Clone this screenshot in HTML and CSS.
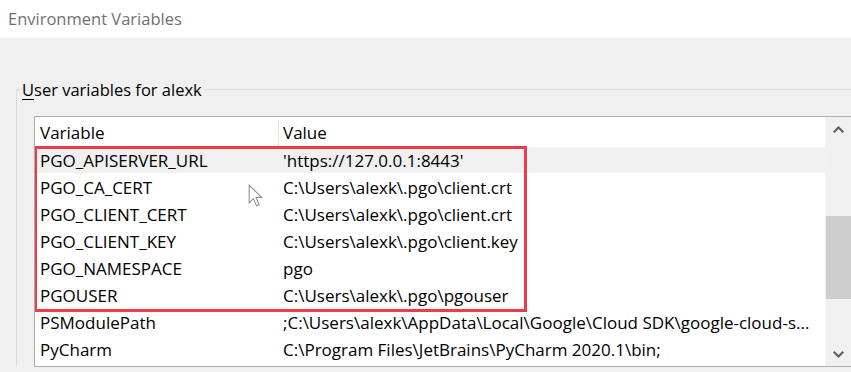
FILE: index.html
```html
<!DOCTYPE html>
<html>
<head>
<meta charset="utf-8">
<link rel="stylesheet" href="styles.css">
</head>
<body>
<div class="titlebar">Environment Variables</div>
<div class="content">
  <fieldset class="group">
    <legend class="group-label"><span class="ul">U</span>ser variables for alexk</legend>
    <div class="listbox">
      <div class="table">
        <div class="row header"><div class="c1 hdr">Variable</div><div class="c2">Value</div></div>
        <div class="row sel"><div class="c1">PGO_APISERVER_URL</div><div class="c2">'https://127.0.0.1:8443'</div></div>
        <div class="row"><div class="c1">PGO_CA_CERT</div><div class="c2">C:\Users\alexk\.pgo\client.crt</div></div>
        <div class="row"><div class="c1">PGO_CLIENT_CERT</div><div class="c2">C:\Users\alexk\.pgo\client.crt</div></div>
        <div class="row"><div class="c1">PGO_CLIENT_KEY</div><div class="c2">C:\Users\alexk\.pgo\client.key</div></div>
        <div class="row"><div class="c1">PGO_NAMESPACE</div><div class="c2">pgo</div></div>
        <div class="row"><div class="c1">PGOUSER</div><div class="c2">C:\Users\alexk\.pgo\pgouser</div></div>
        <div class="row"><div class="c1">PSModulePath</div><div class="c2">;C:\Users\alexk\AppData\Local\Google\Cloud SDK\google-cloud-s...</div></div>
        <div class="row"><div class="c1">PyCharm</div><div class="c2">C:\Program Files\JetBrains\PyCharm 2020.1\bin;</div></div>
      </div>
      <div class="scrollbar">
        <div class="sb-btn">
          <svg width="11" height="7" viewBox="0 0 11 7"><path d="M0 5.5 L5.5 0 L11 5.5 L9.5 7 L5.5 3 L1.5 7 Z" fill="#606060"/></svg>
        </div>
        <div class="sb-space1"></div>
        <div class="sb-thumb"></div>
        <div class="sb-space2"></div>
        <div class="sb-btn">
          <svg width="11" height="7" viewBox="0 0 11 7"><path d="M0 1.5 L5.5 7 L11 1.5 L9.5 0 L5.5 4 L1.5 0 Z" fill="#606060"/></svg>
        </div>
      </div>
      <div class="highlight"></div>
      <svg class="cursor" width="17" height="25" viewBox="0 0 16 24"><path d="M1 1 L1 18 L5 14 L8 21 L10.5 20 L7.5 13 L13 13 Z" fill="#ffffff" stroke="#8a8a8a" stroke-width="1" stroke-linejoin="miter"/></svg>
    </div>
  </fieldset>
</div>
</body>
</html>
```
FILE: styles.css
```css
html, body {
  margin: 0;
  padding: 0;
}
body {
  width: 851px;
  height: 372px;
  overflow: hidden;
  background: #f0f0f0;
  font-family: "Open Sans", "Noto Sans", sans-serif;
  color: #000;
}
.titlebar {
  height: 38px;
  background: #ffffff;
  color: #707070;
  font-size: 16.5px;
  line-height: 38px;
  padding-left: 8px;
  box-sizing: border-box;
}
.content {
  padding-top: 38px;
}
.group {
  margin: 0 0 0 16px;
  padding: 0 0 0 17px;
  border: 1px solid #dcdcdc;
  border-right: none;
  border-bottom: none;
  min-width: 0;
}
.group-label {
  font-size: 16.5px;
  line-height: 24px;
  padding: 2px 2px 0;
  margin-left: -14px;
  color: #000;
}
.ul {
  text-decoration: underline;
  text-underline-offset: 3px;
  text-decoration-thickness: 1px;
}
.listbox {
  position: relative;
  margin-top: 14px;
  height: 251px;
  border: 1px solid #adadad;
  border-right: none;
  background: #ffffff;
  display: flex;
  box-sizing: border-box;
  overflow: hidden;
}
.table {
  width: 790px;
  flex: none;
  font-size: 17px;
}
.row {
  display: flex;
  height: 27px;
  align-items: center;
  white-space: nowrap;
  padding-top: 1px;
  box-sizing: border-box;
}
.row.header {
  height: 30px;
  padding-top: 0;
}
.row.sel {
  background: #f0f0f0;
  height: 26px;
}
.c1 {
  width: 244px;
  padding-left: 5px;
  box-sizing: border-box;
  flex: none;
}
.c1.hdr {
  border-right: 1px solid #e5e5e5;
  height: 26px;
  line-height: 26px;
  align-self: flex-start;
  margin-top: 3px;
}
.header .c2 {
  align-self: flex-start;
  margin-top: 3px;
  line-height: 26px;
}
.c2 {
  padding-left: 4px;
}
.scrollbar {
  width: 26px;
  flex: none;
  background: #f0f0f0;
  display: flex;
  flex-direction: column;
  border-left: 1px solid #f4f4f4;
  box-sizing: border-box;
}
.sb-btn {
  height: 24px;
  display: flex;
  align-items: center;
  justify-content: center;
  flex: none;
}
.sb-space1 {
  height: 75px;
  flex: none;
}
.sb-thumb {
  height: 83px;
  background: #cdcdcd;
  flex: none;
}
.sb-space2 {
  flex: 1;
}
.highlight {
  position: absolute;
  left: -1px;
  top: 29px;
  width: 493px;
  height: 166px;
  border: 3px solid #ef3b45;
  box-sizing: border-box;
}
.cursor {
  position: absolute;
  left: 213px;
  top: 67px;
}
```
